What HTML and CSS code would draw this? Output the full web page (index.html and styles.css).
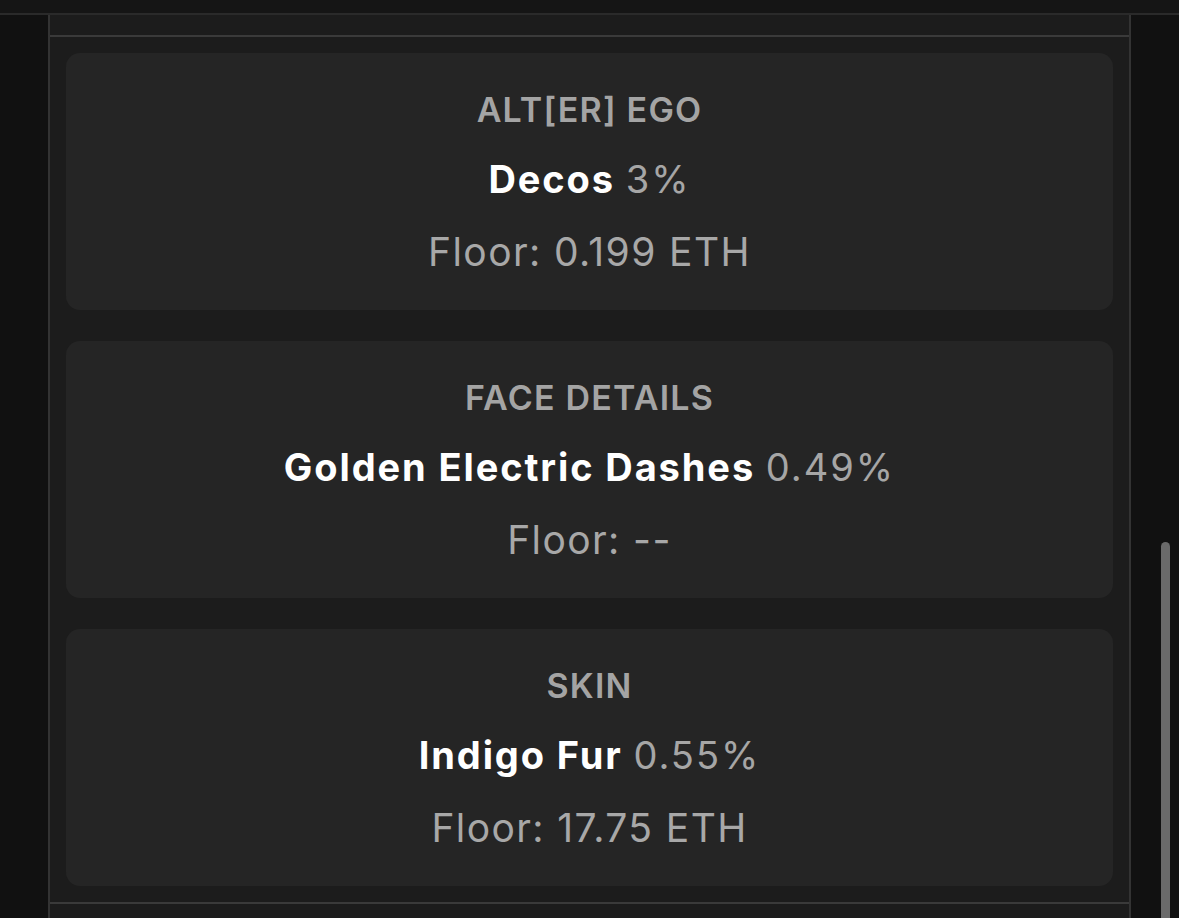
FILE: index.html
```html
<!DOCTYPE html>
<html>
<head>
<meta charset="utf-8">
<link rel="stylesheet" href="styles.css">
</head>
<body>
<div class="topbar"></div>
<div class="main">
  <div class="gutter-left"></div>
  <div class="panel">
    <div class="panel-head"></div>
    <div class="cards">
      <div class="card">
        <div class="trait-type">ALT[ER] EGO</div>
        <div class="trait-value"><span class="name">Decos</span> <span class="pct">3%</span></div>
        <div class="floor">Floor: 0.199 ETH</div>
      </div>
      <div class="card">
        <div class="trait-type">FACE DETAILS</div>
        <div class="trait-value"><span class="name">Golden Electric Dashes</span> <span class="pct">0.49%</span></div>
        <div class="floor">Floor: --</div>
      </div>
      <div class="card">
        <div class="trait-type">SKIN</div>
        <div class="trait-value"><span class="name">Indigo Fur</span> <span class="pct">0.55%</span></div>
        <div class="floor">Floor: 17.75 ETH</div>
      </div>
    </div>
    <div class="panel-foot"></div>
  </div>
  <div class="gutter-right">
    <div class="thumb"></div>
  </div>
</div>
</body>
</html>
```
FILE: styles.css
```css
html, body {
  margin: 0;
  padding: 0;
  height: 100%;
  overflow: hidden;
}
body {
  background: #111111;
  font-family: Inter, "Noto Sans", "Liberation Sans", sans-serif;
}
.topbar {
  height: 13px;
  background: #151515;
  border-bottom: 2px solid #2a2a2a;
}
.main {
  display: flex;
  height: 903px;
}
.gutter-left {
  width: 48px;
  flex: none;
}
.panel {
  width: 1079px;
  flex: none;
  background: #1c1c1c;
  border-left: 2px solid #333333;
  border-right: 2px solid #333333;
  display: flex;
  flex-direction: column;
}
.panel-head {
  height: 20px;
  border-bottom: 2px solid #3a3a3a;
}
.cards {
  display: flex;
  flex-direction: column;
  gap: 31px;
  padding: 16px;
}
.card {
  height: 257px;
  box-sizing: border-box;
  background: #252525;
  border-radius: 14px;
  padding-top: 37px;
  text-align: center;
}
.trait-type {
  font-size: 34px;
  line-height: 40px;
  font-weight: 600;
  letter-spacing: 1.2px;
  color: #a4a4a4;
}
.trait-value {
  margin-top: 27px;
  font-size: 38px;
  line-height: 44px;
}
.name {
  font-weight: 700;
  letter-spacing: 1.9px;
  color: #ffffff;
}
.pct {
  letter-spacing: 2px;
  color: #a6a6a6;
}
.floor {
  margin-top: 29px;
  font-size: 39px;
  line-height: 44px;
  letter-spacing: 1.4px;
  color: #a8a8a8;
}
.panel-foot {
  border-top: 2px solid #3a3a3a;
  flex: 1;
}
.gutter-right {
  flex: 1;
  display: flex;
  flex-direction: column;
  align-items: flex-start;
}
.thumb {
  margin-top: 527px;
  margin-left: 30px;
  width: 9px;
  flex: 1;
  background: #6a6a6a;
  border-radius: 5px 5px 0 0;
}
```
